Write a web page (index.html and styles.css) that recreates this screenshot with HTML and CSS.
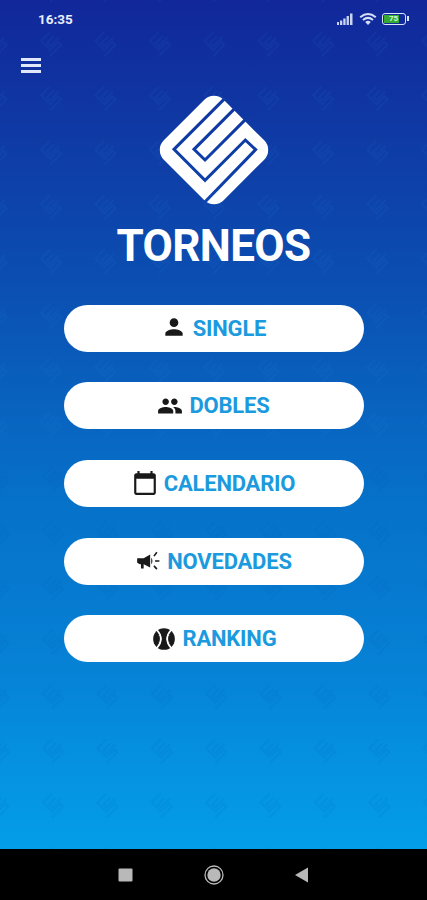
FILE: index.html
```html
<!DOCTYPE html>
<html lang="es">
<head>
  <meta charset="UTF-8">
  <meta name="viewport" content="width=device-width, initial-scale=1.0">
  <title>Torneos</title>
  <link rel="stylesheet" href="styles.css">
</head>
<body>

<div class="screen">
  <svg class="pattern" width="427" height="849">
    <defs>
      <pattern id="marks" x="23" y="15" width="54.4" height="54.4" patternUnits="userSpaceOnUse">
        <path d="M27 17 L18 26 L27 35 L35 27 L38 30 L27 41 M31 21 L24 28 L27 31 L36 22" fill="none" stroke="#2a8ae0" stroke-width="2"/>
      </pattern>
      <pattern id="marks-dark" x="25" y="15" width="54.4" height="54.4" patternUnits="userSpaceOnUse">
        <path d="M27 17 L18 26 L27 35 L35 27 L38 30 L27 41 M31 21 L24 28 L27 31 L36 22" fill="none" stroke="#0050a8" stroke-width="2"/>
      </pattern>
    </defs>
    <rect width="427" height="450" fill="url(#marks)"/>
    <rect y="450" width="427" height="399" fill="url(#marks-dark)"/>
  </svg>

  <div class="status-bar">
    <span class="time">16:35</span>
    <div class="status-icons">
      <svg width="18" height="14" viewBox="0 0 18 14" fill="#c9d4f4">
        <path d="M1 10h2v3H1zM4 8.500h2.300V13H4zM7.300 6.500h2.300V13H7.300zM10.600 4h2.300v9h-2.300zM14 1.500h2.500V13H14z"/>
      </svg>
      <svg width="18" height="14" viewBox="0 0 18 14" fill="none" stroke="#d5dff8" stroke-width="2">
        <path d="M1.200 5.200q7.800-6.400 15.600 0M4 8q5-4.200 10 0"/>
        <path d="M6.200 10q2.800-2.400 5.600 0L9 13z" fill="#d5dff8" stroke="none"/>
      </svg>
      <div class="battery"><span class="charge">75</span></div>
    </div>
  </div>

  <div class="menu-button"><span></span><span></span><span></span></div>

  <div class="content">
    <svg class="logo" width="110" height="110" viewBox="27 27 330 330">
      <defs>
        <mask id="cuts">
          <rect width="390" height="390" fill="#fff"/>
          <path d="M230 32 L72 190 L165 283 L286 162 L317 191 L158 355 M260 62 L132 190 L165 222 L295 92" fill="none" stroke="#000" stroke-width="9"/>
        </mask>
      </defs>
      <g mask="url(#cuts)">
        <rect x="65" y="65" width="254" height="254" rx="41" fill="#fff" transform="rotate(45 192 192)"/>
      </g>
    </svg>
    <h1>TORNEOS</h1>

    <div class="buttons">
      <div class="button single">
        <svg width="26" height="26" viewBox="0 0 24 24"><path d="M12 12c2.200 0 4-1.800 4-4s-1.800-4-4-4-4 1.800-4 4 1.800 4 4 4zm0 2c-2.700 0-8 1.300-8 4v2h16v-2c0-2.700-5.300-4-8-4z"/></svg>
        <span>SINGLE</span>
      </div>
      <div class="button dobles">
        <svg width="26" height="26" viewBox="0 0 24 24"><path d="M16 11c1.660 0 3-1.340 3-3s-1.340-3-3-3-3 1.340-3 3 1.340 3 3 3zm-8 0c1.660 0 3-1.340 3-3S9.660 5 8 5 5 6.340 5 8s1.340 3 3 3zm0 2c-2.330 0-7 1.170-7 3.500V19h14v-2.500C15 14.170 10.330 13 8 13zm8 0c-.3 0-.6 0-1 .05 1.200.84 2 1.970 2 3.450V19h6v-2.500c0-2.330-4.670-3.500-7-3.500z"/></svg>
        <span>DOBLES</span>
      </div>
      <div class="button calendario">
        <svg width="26" height="26" viewBox="0 0 24 24"><path d="M20 3h-1V1h-2v2H7V1H5v2H4c-1.100 0-2 .9-2 2v16c0 1.100.9 2 2 2h16c1.100 0 2-.9 2-2V5c0-1.100-.9-2-2-2zm0 18H4V8h16v13z"/></svg>
        <span>CALENDARIO</span>
      </div>
      <div class="button novedades">
        <svg width="26" height="26" viewBox="0 0 24 24">
          <path d="M2 9.500h6L14 6v12l-6-3v4H5.500v-4H4.500L2 13.500z"/>
          <path d="M15 8.700q2.200 3.300 0 6.600z"/>
          <path d="M17.500 7.500L20.200 4M18.500 12h4M17.500 16.500l2.700 3" fill="none" stroke="#191919" stroke-width="1.500"/>
        </svg>
        <span>NOVEDADES</span>
      </div>
      <div class="button ranking">
        <svg width="26" height="26" viewBox="0 0 24 24">
          <circle cx="12" cy="12" r="10"/>
          <path d="M5.300 3.500Q13 12 5.300 20.500M18.700 3.500Q11 12 18.700 20.500" fill="none" stroke="#fff" stroke-width="1.500"/>
          <path d="M7.200 8.800l2-.8M7.200 15.200l2 .8M16.800 8.800l-2-.8M16.800 15.200l-2 .8M8 12h2M14 12h2" stroke="#fff" stroke-width=".7"/>
        </svg>
        <span>RANKING</span>
      </div>
    </div>
  </div>
</div>

<div class="nav-bar">
  <svg width="20" height="20" viewBox="0 0 20 20"><rect x="2.500" y="3.500" width="14" height="13" rx="1" fill="#b9b9b9"/></svg>
  <svg width="20" height="20" viewBox="0 0 20 20"><circle cx="10" cy="10" r="9" fill="none" stroke="#b9b9b9" stroke-width="1.300"/><circle cx="10" cy="10" r="6.700" fill="#b9b9b9"/></svg>
  <svg width="20" height="20" viewBox="0 0 20 20"><path d="M3 10L16 2.500V17.500z" fill="#b9b9b9"/></svg>
</div>

</body>
</html>
```
FILE: styles.css
```css
* {
  box-sizing: border-box;
}

body {
  margin: 0;
  height: 900px;
  overflow: hidden;
  font-family: Roboto, sans-serif;
  background: #000;
}

.screen {
  position: relative;
  height: 849px;
  background: linear-gradient(to bottom, #11279a 0, #0f38a3 120px, #0b4eb1 280px, #0960bd 390px, #0671c9 500px, #0682d5 670px, #0591e0 760px, #039de8 849px);
}

.pattern {
  position: absolute;
  top: 0;
  left: 0;
  opacity: 0.09;
}

.status-bar {
  display: flex;
  justify-content: space-between;
  align-items: center;
  height: 38px;
  padding: 0 18px 0 38px;
}

.time {
  font-size: 13.5px;
  font-weight: 700;
  color: #e8edfc;
}

.status-icons {
  display: flex;
  align-items: center;
  gap: 5px;
}

.battery {
  position: relative;
  width: 24px;
  height: 12px;
  margin: 0 3px 0 0;
  padding: 1px;
  border: 1.5px solid #dce4fa;
  border-radius: 3px;
}

.battery::after {
  content: "";
  position: absolute;
  right: -4px;
  top: 2px;
  width: 2px;
  height: 5px;
  background: #dce4fa;
}

.charge {
  display: block;
  width: 15px;
  height: 8px;
  padding-left: 5px;
  font-size: 8px;
  line-height: 8px;
  font-weight: 700;
  color: #d9f5d5;
  background: #35a931;
}

.menu-button {
  display: flex;
  flex-direction: column;
  gap: 3px;
  width: 20px;
  margin: 20px 0 0 21px;
}

.menu-button span {
  height: 3px;
  background: #e1e8fa;
}

.content {
  position: relative;
  display: flex;
  flex-direction: column;
  align-items: center;
  padding-top: 22px;
}

.logo {
  display: block;
}

h1 {
  margin: 16px 0 0;
  font-size: 44px;
  line-height: 50px;
  font-weight: 700;
  letter-spacing: -0.6px;
  color: #fff;
}

.buttons {
  display: flex;
  flex-direction: column;
  gap: 30.7px;
  width: 300px;
  margin-top: 33.5px;
}

.button {
  display: flex;
  justify-content: center;
  align-items: center;
  gap: 6px;
  height: 47px;
  border-radius: 24px;
  background: #fff;
  color: #1c9ade;
  font-size: 22px;
  font-weight: 700;
  letter-spacing: -0.2px;
}

.button svg {
  fill: #191919;
}

.single svg {
  margin-bottom: 2px;
}

.nav-bar {
  display: flex;
  justify-content: center;
  align-items: center;
  gap: 68px;
  height: 51px;
  background: #000;
}
```
